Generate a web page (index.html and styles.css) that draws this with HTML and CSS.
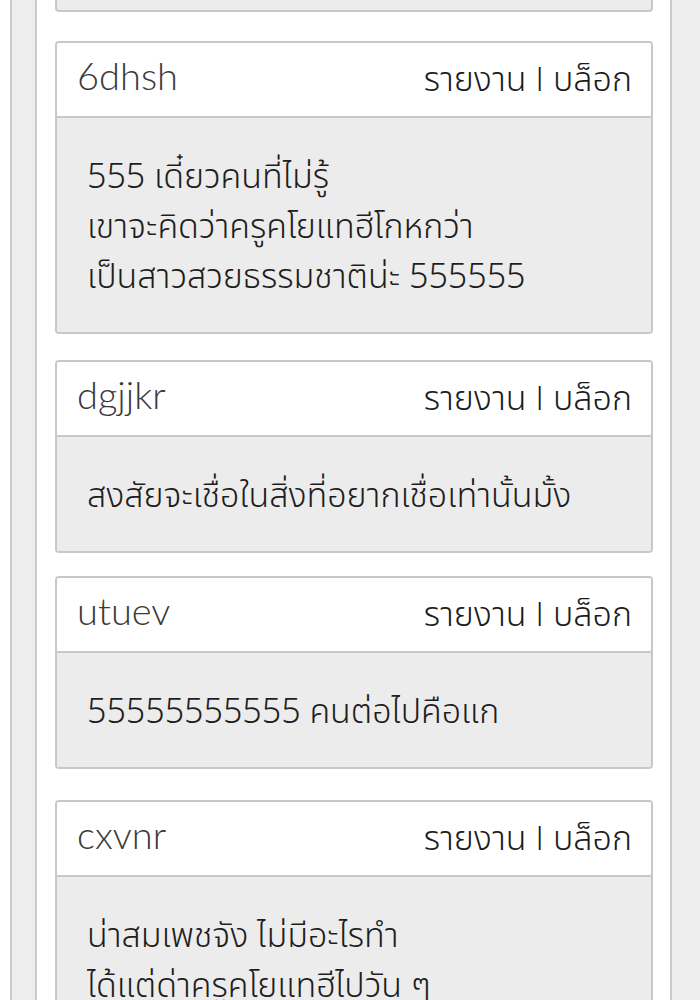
FILE: index.html
```html
<!DOCTYPE html>
<html lang="th">
<head>
<meta charset="utf-8">
<title>ความคิดเห็น</title>
<link rel="stylesheet" href="styles.css">
</head>
<body>
<div class="frame">
  <div class="panel">
    <div class="card-tail"></div>

    <div class="card card-first">
      <div class="card-head">
        <span class="user">6dhsh</span>
        <span class="actions">รายงาน <span class="sep">I</span> บล็อก</span>
      </div>
      <div class="card-body">
        <p>555 เดี๋ยวคนที่ไม่รู้<br>เขาจะคิดว่าครูคโยแทฮีโกหกว่า<br>เป็นสาวสวยธรรมชาติน่ะ 555555</p>
      </div>
    </div>

    <div class="card card-second">
      <div class="card-head">
        <span class="user">dgjjkr</span>
        <span class="actions">รายงาน <span class="sep">I</span> บล็อก</span>
      </div>
      <div class="card-body">
        <p>สงสัยจะเชื่อในสิ่งที่อยากเชื่อเท่านั้นมั้ง</p>
      </div>
    </div>

    <div class="card">
      <div class="card-head">
        <span class="user">utuev</span>
        <span class="actions">รายงาน <span class="sep">I</span> บล็อก</span>
      </div>
      <div class="card-body">
        <p>55555555555 คนต่อไปคือแก</p>
      </div>
    </div>

    <div class="card card-last">
      <div class="card-head">
        <span class="user">cxvnr</span>
        <span class="actions">รายงาน <span class="sep">I</span> บล็อก</span>
      </div>
      <div class="card-body">
        <p>น่าสมเพชจัง ไม่มีอะไรทำ<br>ได้แต่ด่าครูคโยแทฮีไปวัน ๆ</p>
      </div>
    </div>
  </div>
</div>
</body>
</html>
```
FILE: styles.css
```css
* { box-sizing: border-box; }

html, body {
  margin: 0;
  padding: 0;
  background: #ffffff;
  height: 1000px;
  overflow: hidden;
}

.frame {
  margin-left: 10px;
  border-left: 2px solid #cacaca;
  background: #ededed;
  padding: 0 28px 0 23px;
  min-height: 1000px;
}

.panel {
  background: #ffffff;
  border-left: 2px solid #cacaca;
  border-right: 2px solid #cacaca;
  padding: 0 17px 0 18px;
  min-height: 1000px;
}

.card-tail {
  height: 12px;
  background: #ececec;
  border: 2px solid #c8c8c8;
  border-top: none;
  border-radius: 0 0 4px 4px;
}

.card {
  margin-top: 23px;
  border: 2px solid #c8c8c8;
  border-radius: 4px;
  overflow: hidden;
}

.card-first {
  margin-top: 29px;
}

.card-second {
  margin-top: 26px;
}

.card-last {
  margin-top: 31px;
}

.card-head {
  height: 75px;
  background: #ffffff;
  border-bottom: 2px solid #c8c8c8;
  display: flex;
  justify-content: space-between;
  align-items: center;
  padding: 0 19px 4px 20px;
}

.user {
  font-family: Lato, "Noto Sans", sans-serif;
  font-weight: 300;
  font-size: 38px;
  color: #3a3a3a;
  margin-top: -6px;
}

.actions {
  font-family: "Noto Sans Thai", "Noto Sans", sans-serif;
  font-weight: 300;
  font-size: 34px;
  color: #1c1c1c;
  margin-top: 6px;
}

.sep {
  font-family: Lato, "Noto Sans", sans-serif;
  font-weight: 300;
}

.card-body {
  background: #ececec;
  padding: 35px 20px 29px 30px;
}

.card-body p {
  margin: 0;
  font-family: "Noto Sans Thai", "Noto Sans", sans-serif;
  font-weight: 300;
  font-size: 34px;
  line-height: 50px;
  color: #1e1e1e;
}
```
